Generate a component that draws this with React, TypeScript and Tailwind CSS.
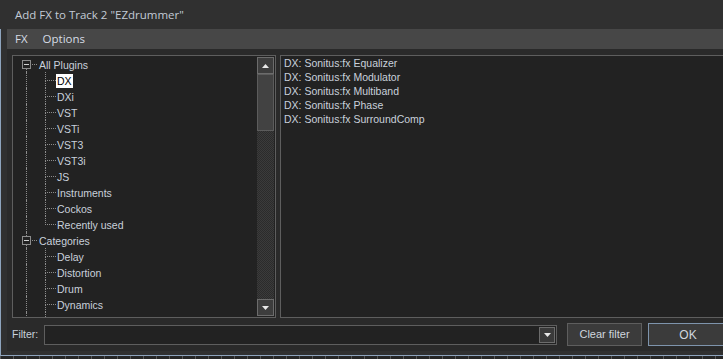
import React from 'react';

type Node = {
  label: string;
  kind: 'top' | 'child';
  first?: boolean;
  last?: boolean;
  selected?: boolean;
};

const tree: Node[] = [
  { label: 'All Plugins', kind: 'top', first: true },
  { label: 'DX', kind: 'child', selected: true },
  { label: 'DXi', kind: 'child' },
  { label: 'VST', kind: 'child' },
  { label: 'VSTi', kind: 'child' },
  { label: 'VST3', kind: 'child' },
  { label: 'VST3i', kind: 'child' },
  { label: 'JS', kind: 'child' },
  { label: 'Instruments', kind: 'child' },
  { label: 'Cockos', kind: 'child' },
  { label: 'Recently used', kind: 'child', last: true },
  { label: 'Categories', kind: 'top' },
  { label: 'Delay', kind: 'child' },
  { label: 'Distortion', kind: 'child' },
  { label: 'Drum', kind: 'child' },
  { label: 'Dynamics', kind: 'child' },
  { label: '', kind: 'child' },
];

const plugins = [
  'DX: Sonitus:fx Equalizer',
  'DX: Sonitus:fx Modulator',
  'DX: Sonitus:fx Multiband',
  'DX: Sonitus:fx Phase',
  'DX: Sonitus:fx SurroundComp',
];

const dot = 'border-dotted border-[#8c8c8c]';

const TreeRow: React.FC<{ node: Node }> = ({ node }) => {
  if (node.kind === 'top') {
    return (
      <div className="flex h-[16px] shrink-0 items-stretch">
        <div className="w-[9px] shrink-0" />
        <div className="flex w-[9px] shrink-0 flex-col pl-[4px]">
          <div className={`flex-1 ${node.first ? '' : `border-l ${dot}`}`} />
          <div className="-ml-[4px] flex h-[9px] w-[9px] items-center justify-center border border-[#8c8c8c]">
            <div className="h-px w-[5px] bg-[#d0d0d0]" />
          </div>
          <div className={`flex-1 border-l ${dot}`} />
        </div>
        <div className={`ml-[1px] mt-[1px] w-[5px] self-center border-t ${dot}`} />
        <div className="pl-[2px] pt-[1px] leading-[16px] text-[#c9d1dc]">{node.label}</div>
      </div>
    );
  }
  return (
    <div className="flex h-[16px] shrink-0 items-stretch">
      <div className="w-[9px] shrink-0" />
      <div className="w-[9px] shrink-0 pl-[4px]">
        <div className={`h-full border-l ${dot}`} />
      </div>
      <div className="w-[14px] shrink-0" />
      <div className="flex w-[11px] shrink-0 flex-col">
        <div className={`h-[9px] border-l border-b ${dot}`} />
        <div className={`flex-1 ${node.last ? '' : `border-l ${dot}`}`} />
      </div>
      <div className="flex items-center pt-[1px]">
        <span
          className={`h-[14px] px-[1px] leading-[14px] ${
            node.selected ? 'bg-white text-black' : 'text-[#c9d1dc]'
          }`}
        >
          {node.label}
        </span>
      </div>
    </div>
  );
};

const Arrow: React.FC<{ down?: boolean }> = ({ down }) => (
  <svg width="7" height="4" viewBox="0 0 7 4">
    <polygon points={down ? '0,0 7,0 3.5,4' : '0,4 7,4 3.5,0'} fill="#e8e8e8" />
  </svg>
);

const App: React.FC = () => {
  return (
    <div className="flex h-[359px] w-[723px] flex-col overflow-hidden bg-[#303030] font-['Liberation_Sans',Arial,sans-serif]">
      {/* Title bar */}
      <div className="flex h-[29px] shrink-0 items-center pl-[15px] font-['Open_Sans',sans-serif] text-[11.5px] text-[#c3cbd6]">
        Add FX to Track 2 "EZdrummer"
      </div>

      <div className="flex flex-1 border-l border-[#8ea4bd]">
        <div className="w-[6px] shrink-0" />
        <div className="flex flex-1 flex-col">
          {/* Menu bar */}
          <div className="flex h-[20px] shrink-0 items-center gap-[15px] bg-[#474747] pl-[8px] font-['Open_Sans',sans-serif] text-[11.5px] text-[#d6dce4]">
            <span>FX</span>
            <span>Options</span>
          </div>

          {/* Client area */}
          <div className="flex flex-1 flex-col bg-[#2a2a2a] pl-[5px] pt-[6px] text-[10.5px]">
            <div className="flex h-[263px] shrink-0 gap-[4px]">
              {/* Tree */}
              <div className="flex w-[264px] shrink-0 border border-[#5e5e5e] bg-[#222222]">
                <div className="flex flex-1 flex-col overflow-hidden">
                  {tree.map((n, i) => (
                    <TreeRow key={i} node={n} />
                  ))}
                </div>
                <div className="flex w-[19px] shrink-0 flex-col p-[1px]">
                  <div className="flex h-[17px] shrink-0 items-center justify-center border border-[#6c6c6c] bg-[#3d3d3d]">
                    <Arrow />
                  </div>
                  <div className="h-[57px] shrink-0 border border-[#5c5c5c] bg-[#424242]" />
                  <div className="flex-1 bg-[repeating-conic-gradient(#3b3b3b_0_25%,#2b2b2b_0_50%)] bg-[length:2px_2px]" />
                  <div className="flex h-[17px] shrink-0 items-center justify-center border border-[#6c6c6c] bg-[#3d3d3d]">
                    <Arrow down />
                  </div>
                </div>
              </div>

              {/* Plugin list */}
              <div className="flex flex-1 flex-col border-y border-l border-[#5e5e5e] bg-[#222222] pl-[3px]">
                {plugins.map((p) => (
                  <div key={p} className="h-[14px] leading-[14px] text-[#c9d1dc]">
                    {p}
                  </div>
                ))}
              </div>
            </div>

            {/* Filter row */}
            <div className="mt-[5px] flex h-[23px] shrink-0 items-center">
              <div className="w-[32px] shrink-0 text-[#c9d1dc]">Filter:</div>
              <div className="flex h-[20px] w-[513px] shrink-0 justify-end border border-[#5e5e5e] bg-[#222222] p-[1px]">
                <div className="flex w-[16px] items-center justify-center border border-[#6c6c6c] bg-[#3a3a3a]">
                  <Arrow down />
                </div>
              </div>
              <button className="ml-[10px] flex h-[23px] w-[75px] shrink-0 items-center justify-center border border-[#5e5e5e] bg-[#3b3b3b] text-[11px] text-[#d0d6de]">
                Clear filter
              </button>
              <button className="ml-[6px] flex h-[23px] w-[80px] shrink-0 items-center justify-center border border-[#7e94ac] bg-[#3b3b3b] text-[12px] text-[#d0d6de]">
                OK
              </button>
            </div>
            <div className="h-[5px] shrink-0" />
          </div>
          <div className="h-[4px] shrink-0" />
        </div>
      </div>

      {/* Window bottom edge */}
      <div className="h-px shrink-0 bg-[#8ea4bd]" />
      <div className="h-[3px] shrink-0 bg-[#262626] bg-[repeating-linear-gradient(90deg,#555555_0_1px,transparent_1px_13px)]" />
    </div>
  );
};

export default App;
